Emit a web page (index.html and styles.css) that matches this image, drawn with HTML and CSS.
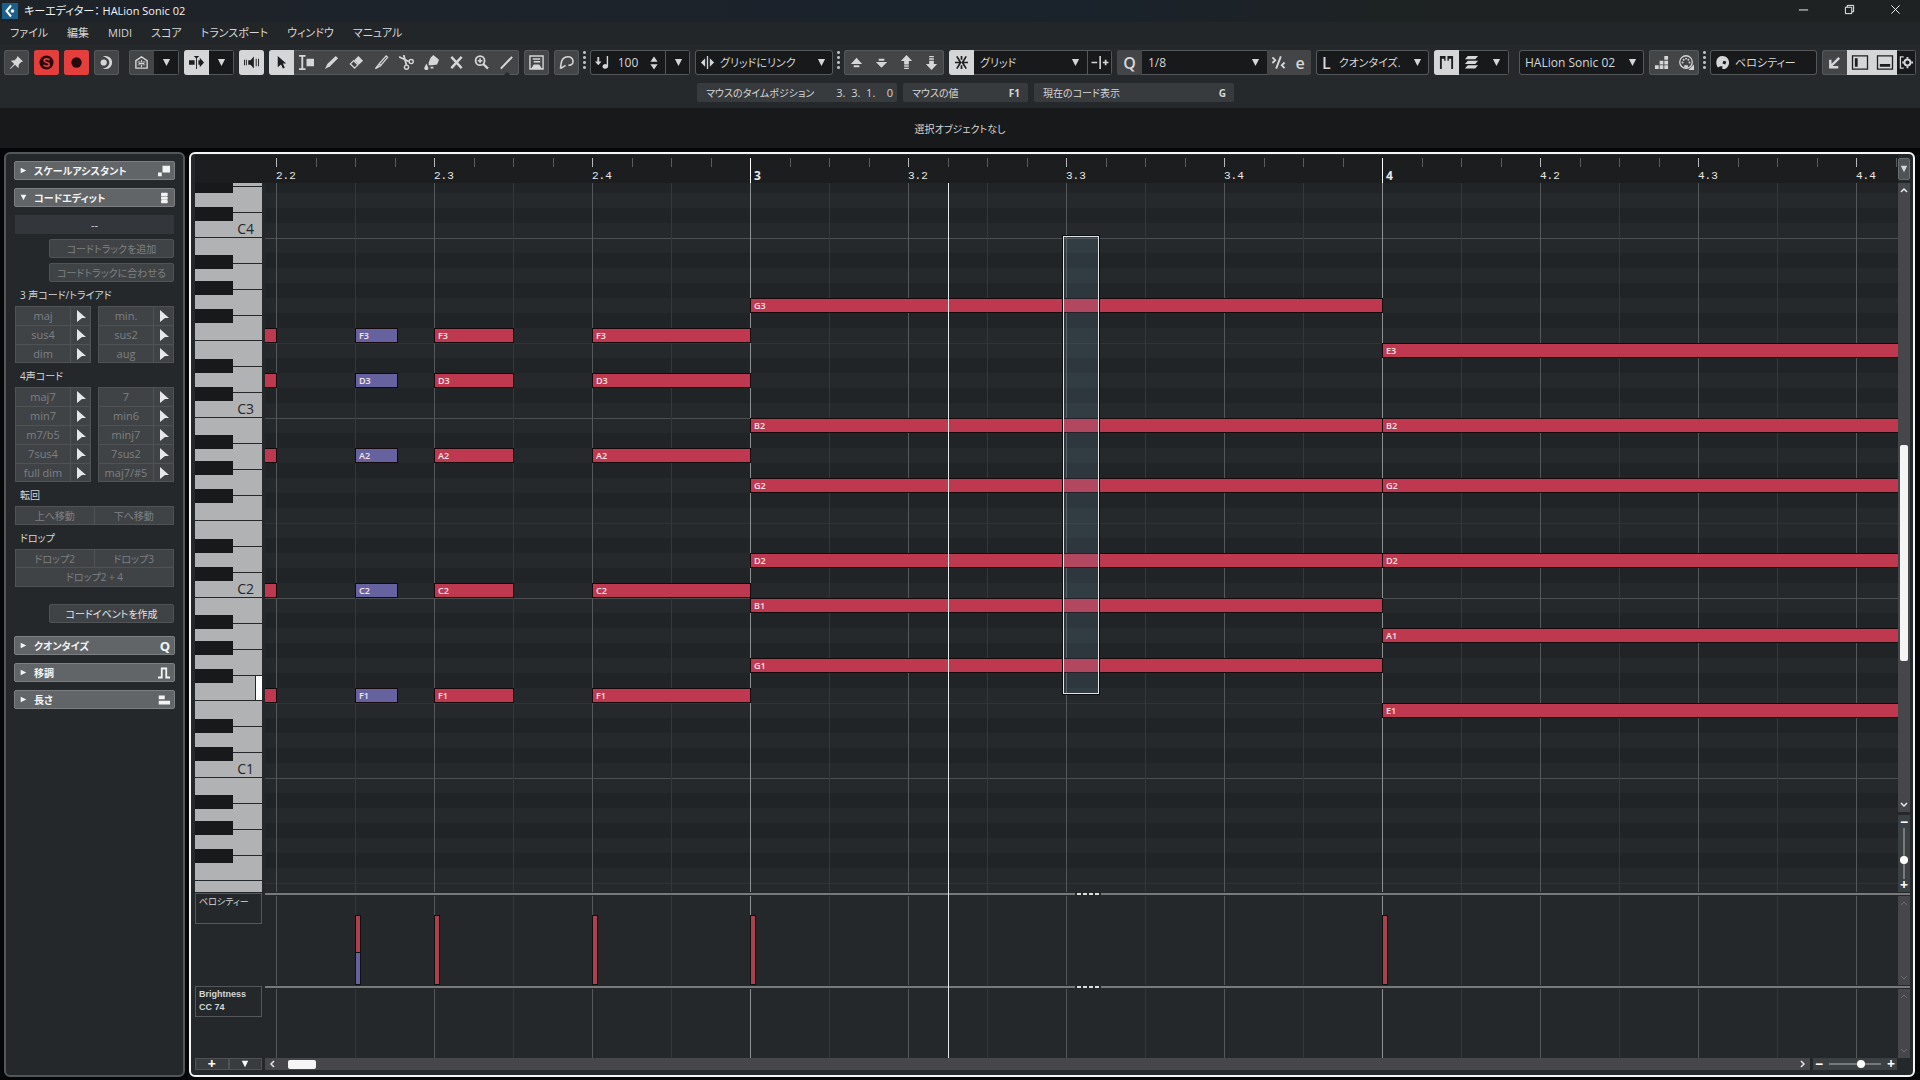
FILE: index.html
```html
<!DOCTYPE html>
<html lang="ja">
<head>
  <meta charset="UTF-8" />
  <title>キーエディター： HALion Sonic 02</title>
  <link rel="stylesheet" href="styles.css">
</head>
<body>
  <!-- icon set -->
  <svg class="sprite" aria-hidden="true">
    <symbol id="i-down" viewBox="0 0 10 10"><path d="M1 1h8L5 9z"/></symbol>
    <symbol id="i-right" viewBox="0 0 10 10"><path d="M1 1v8l8-4z"/></symbol>
    <symbol id="i-pin" viewBox="0 0 16 16"><path d="M9 1l6 6-2 .5-2.500 2.500L10 14l-3.500-3.500L1.500 15 1 14.500 5.500 9.500 2 6l4-.5L8.500 3z"/></symbol>
    <symbol id="i-solo" viewBox="0 0 16 16"><circle cx="8" cy="8" r="7.500"/><path d="M11 5.500C10 3.500 5.500 3.500 5.500 6S11 7.500 11 10s-5 2.500-6 .5" fill="none" stroke="#e43e3d" stroke-width="1.800"/></symbol>
    <symbol id="i-rec" viewBox="0 0 16 16"><circle cx="8" cy="8" r="5.500"/></symbol>
    <symbol id="i-moon" viewBox="0 0 16 16"><path d="M7 1a7 7 0 0 1 0 14H4c5-2 7-4 7-7S9 3 4 1z"/><circle cx="5" cy="8" r="3.300"/></symbol>
    <symbol id="i-home" viewBox="0 0 16 16"><path d="M2 6l6-4 6 4v8H2z" fill="none" stroke="currentColor" stroke-width="1.500"/><path d="M4 7h3v1H4zm5 0h3v1H9zM7.500 5h1v3h-1zM4 10h3v1H4zm5 0h3v1H9zM7.500 10h1v3h-1zM5 8.500h6v1H5z"/></symbol>
    <symbol id="i-scroll" viewBox="0 0 16 16"><path d="M0 5.500h6v5H0zM10 5.500h1.500V3l4.500 5-4.500 5v-2.500H10zM5 1h6L8.500 3.500V15h-1V3.500z"/></symbol>
    <symbol id="i-speaker" viewBox="0 0 16 16"><path d="M4.500 5.500H7l3.500-4v13L7 10.500H4.500zM0 5h1v6H0zM2 5h1v6H2zM12.500 4h1v8h-1zM15 4h1v8h-1z"/></symbol>
    <symbol id="i-pointer" viewBox="0 0 16 16"><path d="M4 1l9 8H9.500l2 4.500-2 1L7.500 10 4 13z"/></symbol>
    <symbol id="i-range" viewBox="0 0 16 16"><path d="M0 0h7v1.800H4.500v12.400H7V16H0v-1.800h2.500V1.800H0zM8 4h8v8H8z"/></symbol>
    <symbol id="i-pencil" viewBox="0 0 16 16"><path d="M12.500 1L15 3.500 6.500 12 1 15l2.500-5.500z"/></symbol>
    <symbol id="i-eraser" viewBox="0 0 16 16"><path d="M10 1l5 5-4.500 4.500-5-5z"/><path d="M5 6l4.500 4.500L6 14 1.500 9.500z" fill="none" stroke="currentColor" stroke-width="1.400"/></symbol>
    <symbol id="i-trim" viewBox="0 0 16 16"><path d="M13 1l1.500 1.500L7 11.500 5.500 9.500zM5.500 9.500L7 11.500 1.500 14.500z" fill="none" stroke="currentColor" stroke-width="1.400"/></symbol>
    <symbol id="i-split" viewBox="0 0 16 16"><path d="M0 2l10.500 5M8 11L5 0" fill="none" stroke="currentColor" stroke-width="1.900"/><circle cx="13" cy="7" r="2.200" fill="none" stroke="currentColor" stroke-width="1.500"/><circle cx="8" cy="13" r="2.200" fill="none" stroke="currentColor" stroke-width="1.500"/></symbol>
    <symbol id="i-glue" viewBox="0 0 16 16"><path d="M10 0l6 5-2 5-5 1-4 0 0-3 2-5zM2.500 9l1.900 4a2.200 2.200 0 1 1-3.800 0zM7 12.500h3v2H7z"/></symbol>
    <symbol id="i-x" viewBox="0 0 16 16"><path d="M2.500 2l11 12M13.500 2l-11 12" stroke="currentColor" stroke-width="2.600"/></symbol>
    <symbol id="i-zoom" viewBox="0 0 16 16"><circle cx="6.500" cy="6" r="4.800" fill="none" stroke="currentColor" stroke-width="1.900"/><path d="M4 5.200h5v1.600H4zM5.700 3.500h1.600v5H5.700zM9 10.500l1.800-1.800 5 5-1.800 1.800z"/></symbol>
    <symbol id="i-line" viewBox="0 0 16 16"><path d="M2 14.500L14 2" stroke="currentColor" stroke-width="2.200"/></symbol>
    <symbol id="i-stamp" viewBox="0 0 16 16"><path d="M1 1h14v14H1z" fill="none" stroke="currentColor" stroke-width="1.500"/><path d="M4 3.500h8V5H4zM5 6.500h7V8H5zM2 15l3-5h6l3 5z"/></symbol>
    <symbol id="i-curve" viewBox="0 0 16 16"><path d="M1.500 14.500L2.500 8C4 0 15 0 15 7c0 3-3 4-5 4M1.500 14.500L7 11" fill="none" stroke="currentColor" stroke-width="1.700"/></symbol>
    <symbol id="i-vel" viewBox="0 0 16 16"><path d="M2.500 2h2v5H7L3.500 11 0 7h2.500zM12.500 1H14v11a3 2.500 0 1 1-1.500-2z"/></symbol>
    <symbol id="i-spin" viewBox="0 0 10 16"><path d="M5 0l4.500 6.500h-9zM5 16L.5 9.500h9z"/></symbol>
    <symbol id="i-link" viewBox="0 0 16 16"><path d="M7.300 1h1.400v14H7.300zM5.500 3.500v9L1 8zM10.500 3.500v9L15 8z"/></symbol>
    <symbol id="i-up1" viewBox="0 0 16 16"><path d="M8 3l6 6.500H2zM5 11h6v2H5z"/></symbol>
    <symbol id="i-dn1" viewBox="0 0 16 16"><path d="M8 13.500L2 7.500h12zM5 4h6v2H5z"/></symbol>
    <symbol id="i-up2" viewBox="0 0 16 16"><path d="M8 0l6 6.500h-3.500V10h-5V6.500H2zM5.500 11h5v1.500h-5zM5.500 13.500h5V15h-5z"/></symbol>
    <symbol id="i-dn2" viewBox="0 0 16 16"><path d="M8 16l6-6.500h-3.500V6h-5v3.500H2zM5.500 3.500h5V5h-5zM5.500 1h5v1.500h-5z"/></symbol>
    <symbol id="i-snap" viewBox="0 0 16 16"><path d="M3 1.500L7 8l-4 6.500M13 1.500L9 8l4 6.500M8 1v4M8 11v4M1 8h5M10 8h5" fill="none" stroke="currentColor" stroke-width="1.800"/></symbol>
    <symbol id="i-gridtype" viewBox="0 0 18 16"><path d="M8.300 1h1.700v14H8.300zM0 7.100h6v1.800H0zM12 7.100h6v1.800h-6zM14.100 5h1.800v6h-1.800z"/></symbol>
    <symbol id="i-iter" viewBox="0 0 16 16"><path d="M10.500 1.500L5.500 14.500M1.500 2.500L4.500 5.500 1.500 8.500M14.500 8l-3 3 3 3" fill="none" stroke="currentColor" stroke-width="2"/></symbol>
    <symbol id="i-parts" viewBox="0 0 16 16"><path d="M1 1h6v5H5.500V4H3v11H1zM9 1h6v14h-2V4h-2.500v2H9z"/></symbol>
    <symbol id="i-layers" viewBox="0 0 16 16"><path d="M4 1h11l-3 3.500H1zM4 6h11l-3 3.500H1zM4 11h11l-3 3.500H1z"/></symbol>
    <symbol id="i-steps" viewBox="0 0 16 16"><path d="M1 11h4v4H1zM6 11h4v4H6zM11 11h4v4h-4zM6 6h4v4H6zM11 6h4v4h-4zM11 1h4v4h-4z"/></symbol>
    <symbol id="i-midi" viewBox="0 0 16 16"><circle cx="7.500" cy="7.500" r="6.700" fill="none" stroke="currentColor" stroke-width="1.400"/><circle cx="3.800" cy="8" r="1"/><circle cx="5" cy="5" r="1"/><circle cx="7.500" cy="3.800" r="1"/><circle cx="10" cy="5" r="1"/><circle cx="11.200" cy="8" r="1"/><path d="M16 10v6h-6zM5.500 11h4v2.500h-4z"/></symbol>
    <symbol id="i-palette" viewBox="0 0 16 16"><path d="M8 1c4 0 7 3 7 7 0 3-2 7-6 7-2 0-1-2-1-3H6c-2 0-1 1.500-3 1C0 9 1 1 8 1z"/><path d="M9 6l3 1-1 3-3-1z" fill="#17191a"/></symbol>
    <symbol id="i-corner" viewBox="0 0 16 16"><path d="M13 3L4 12M3.500 5v8H12" fill="none" stroke="currentColor" stroke-width="2.600"/></symbol>
    <symbol id="i-zleft" viewBox="0 0 18 16"><path d="M1 1h16v14H1z" fill="none" stroke="currentColor" stroke-width="1.400"/><path d="M3.500 3.500h3v9h-3z"/></symbol>
    <symbol id="i-zlow" viewBox="0 0 18 16"><path d="M1 1h16v14H1z" fill="none" stroke="currentColor" stroke-width="1.400"/><path d="M3.500 9.500h11v3h-11z"/></symbol>
    <symbol id="i-gear" viewBox="0 0 16 16"><path d="M5 2H1.500v12H5" fill="none" stroke="currentColor" stroke-width="1.400"/><circle cx="9" cy="8" r="3.200" fill="none" stroke="currentColor" stroke-width="2"/><path d="M8 2h2v2H8zM8 12h2v2H8zM13 7h2v2h-2zM3.500 7h2v2h-2z"/></symbol>
    <symbol id="i-notes" viewBox="0 0 16 16"><path d="M6 1h10v9H6zM0 10h5v5H0z"/></symbol>
    <symbol id="i-stack" viewBox="0 0 16 16"><path d="M5 2h7v2.500H5zM5 6.800h7v2.500H5zM5 11.600h7v2.500H5z" stroke="currentColor" stroke-width="1.800" stroke-linejoin="round"/></symbol>
    <symbol id="i-transpose" viewBox="0 0 16 16"><path d="M0 14h5V2h6v12h5" fill="none" stroke="currentColor" stroke-width="2.400"/></symbol>
    <symbol id="i-length" viewBox="0 0 16 16"><path d="M1 2h8v5H1zM1 9h15v5H1z"/></symbol>
    <symbol id="i-logo" viewBox="0 0 16 16"><path d="M9 2.500L4.500 8 9 13.500" fill="none" stroke="currentColor" stroke-width="2"/><circle cx="10.500" cy="8" r="1.800"/></symbol>
  </svg>

  <header class="titlebar">
    <span class="logo"><svg><use href="#i-logo"/></svg></span>
    <h1>キーエディター： HALion Sonic 02</h1>
    <div class="winbtns">
      <button aria-label="最小化"><svg viewBox="0 0 12 12"><path d="M1 6.500h10"/></svg></button>
      <button aria-label="元に戻す"><svg viewBox="0 0 12 12"><path d="M1.500 3.500h7v7h-7zM3.500 3.500v-2h7v7h-2"/></svg></button>
      <button aria-label="閉じる"><svg viewBox="0 0 12 12"><path d="M1.500 1.500l9 9M10.500 1.500l-9 9"/></svg></button>
    </div>
  </header>

  <nav class="menu">
    <button>ファイル</button>
    <button>編集</button>
    <button>MIDI</button>
    <button>スコア</button>
    <button>トランスポート</button>
    <button>ウィンドウ</button>
    <button>マニュアル</button>
  </nav>

  <div class="toolbar">
    <div class="group"><button aria-label="固定"><svg><use href="#i-pin"/></svg></button></div>
    <div class="group"><button class="red" aria-label="ソロ"><svg><use href="#i-solo"/></svg></button></div>
    <div class="group"><button class="red" aria-label="録音"><svg><use href="#i-rec"/></svg></button></div>
    <div class="group"><button aria-label="フィードバック"><svg><use href="#i-moon"/></svg></button></div>
    <div class="group wide-gap">
      <button aria-label="ズーム"><svg><use href="#i-home"/></svg></button>
      <button class="dark" aria-label="ズームメニュー"><svg class="tri"><use href="#i-down"/></svg></button>
    </div>
    <div class="group">
      <button class="on" aria-label="自動スクロール"><svg><use href="#i-scroll"/></svg></button>
      <button class="dark" aria-label="スクロール設定"><svg class="tri"><use href="#i-down"/></svg></button>
    </div>
    <div class="group"><button class="on" aria-label="試聴"><svg><use href="#i-speaker"/></svg></button></div>
    <div class="group">
      <button class="on" aria-label="選択"><svg><use href="#i-pointer"/></svg></button>
      <button aria-label="範囲"><svg><use href="#i-range"/></svg></button>
      <button aria-label="鉛筆"><svg><use href="#i-pencil"/></svg></button>
      <button aria-label="消しゴム"><svg><use href="#i-eraser"/></svg></button>
      <button aria-label="トリム"><svg><use href="#i-trim"/></svg></button>
      <button aria-label="分割"><svg><use href="#i-split"/></svg></button>
      <button aria-label="のり"><svg><use href="#i-glue"/></svg></button>
      <button aria-label="ミュート"><svg><use href="#i-x"/></svg></button>
      <button aria-label="虫眼鏡"><svg><use href="#i-zoom"/></svg></button>
      <button class="has-more" aria-label="ライン"><svg><use href="#i-line"/></svg></button>
    </div>
    <div class="group"><button aria-label="スタンプ"><svg><use href="#i-stamp"/></svg></button></div>
    <div class="group"><button aria-label="カーブ"><svg><use href="#i-curve"/></svg></button></div>
    <span class="dots"></span>
    <div class="group dark w-velocity">
      <svg class="lead"><use href="#i-vel"/></svg>
      <input type="number" value="100" aria-label="挿入ベロシティー">
      <svg class="spin"><use href="#i-spin"/></svg>
      <button class="dark divided" aria-label="ベロシティーメニュー"><svg class="tri"><use href="#i-down"/></svg></button>
    </div>
    <div class="group dark w-link">
      <svg class="lead"><use href="#i-link"/></svg>
      <select class="kana" aria-label="グリッドリンク"><option>グリッドにリンク</option></select>
      <svg class="tri"><use href="#i-down"/></svg>
    </div>
    <span class="dots"></span>
    <div class="group">
      <button aria-label="上へ"><svg><use href="#i-up1"/></svg></button>
      <button aria-label="下へ"><svg><use href="#i-dn1"/></svg></button>
      <button aria-label="オクターブ上へ"><svg><use href="#i-up2"/></svg></button>
      <button aria-label="オクターブ下へ"><svg><use href="#i-dn2"/></svg></button>
    </div>
    <div class="group dark w-snap">
      <button class="on" aria-label="スナップ"><svg><use href="#i-snap"/></svg></button>
      <select class="kana" aria-label="スナップタイプ"><option>グリッド</option></select>
      <svg class="tri"><use href="#i-down"/></svg>
      <button class="dark divided" aria-label="グリッドタイプ"><svg class="wide"><use href="#i-gridtype"/></svg></button>
    </div>
    <div class="group dark w-quantize">
      <button class="letter" aria-label="クオンタイズ">Q</button>
      <select aria-label="クオンタイズ値"><option>1/8</option></select>
      <svg class="tri"><use href="#i-down"/></svg>
      <button class="slim" aria-label="反復"><svg><use href="#i-iter"/></svg></button>
      <button class="letter slim" aria-label="設定">e</button>
    </div>
    <div class="group dark w-length">
      <span class="letter">L</span>
      <select class="kana" aria-label="長さ"><option>クオンタイズ.</option></select>
      <svg class="tri"><use href="#i-down"/></svg>
    </div>
    <div class="group dark">
      <button class="on" aria-label="パート枠"><svg><use href="#i-parts"/></svg></button>
      <button class="dark" aria-label="レイヤー"><svg><use href="#i-layers"/></svg></button>
      <button class="dark" aria-label="レイヤーメニュー"><svg class="tri"><use href="#i-down"/></svg></button>
    </div>
    <div class="group dark wide-gap w-part">
      <select aria-label="パート"><option>HALion Sonic 02</option></select>
      <svg class="tri"><use href="#i-down"/></svg>
    </div>
    <div class="group">
      <button aria-label="ステップ入力"><svg><use href="#i-steps"/></svg></button>
      <button aria-label="MIDI 入力"><svg><use href="#i-midi"/></svg></button>
    </div>
    <span class="dots"></span>
    <div class="group dark w-color">
      <svg class="lead"><use href="#i-palette"/></svg>
      <select class="kana" aria-label="カラー"><option>ベロシティー</option></select>
    </div>
    <div class="group">
      <button aria-label="別ウィンドウ"><svg><use href="#i-corner"/></svg></button>
      <button class="on" aria-label="左ゾーン"><svg class="wide"><use href="#i-zleft"/></svg></button>
      <button class="on" aria-label="下ゾーン"><svg class="wide"><use href="#i-zlow"/></svg></button>
      <button class="dark gear" aria-label="設定"><svg><use href="#i-gear"/></svg></button>
    </div>
  </div>

  <div class="info">
    <div class="field w-time"><span>マウスのタイムポジション</span><span class="pos">3.&nbsp; 3.&nbsp; 1.&nbsp; &nbsp; 0</span></div>
    <div class="field w-value"><span>マウスの値</span><b>F1</b></div>
    <div class="field w-chord"><span>現在のコード表示</span><b>G</b></div>
  </div>

  <div class="status">選択オブジェクトなし</div>

  <main>
    <aside class="panel">
      <button class="section"><svg class="tw"><use href="#i-right"/></svg>スケールアシスタント<svg><use href="#i-notes"/></svg></button>
      <button class="section"><svg class="tw"><use href="#i-down"/></svg>コードエディット<svg><use href="#i-stack"/></svg></button>
      <div class="inspector">
        <div class="chordname">--</div>
        <button class="cmd" disabled>コードトラックを追加</button>
        <button class="cmd" disabled>コードトラックに合わせる</button>
        <h2>3 声コード/トライアド</h2>
        <div class="chords" data-chords="maj,min.,sus4,sus2,dim,aug"></div>
        <h2>4声コード</h2>
        <div class="chords" data-chords="maj7,7,min7,min6,m7/b5,minj7,7sus4,7sus2,full dim,maj7/#5"></div>
        <h2>転回</h2>
        <div class="pair">
          <button disabled>上へ移動</button><button disabled>下へ移動</button>
        </div>
        <h2>ドロップ</h2>
        <div class="pair">
          <button disabled>ドロップ2</button><button disabled>ドロップ3</button>
          <button class="full" disabled>ドロップ2 + 4</button>
        </div>
        <button class="cmd create">コードイベントを作成</button>
      </div>
      <button class="section"><svg class="tw"><use href="#i-right"/></svg>クオンタイズ<span class="q">Q</span></button>
      <button class="section"><svg class="tw"><use href="#i-right"/></svg>移調<svg><use href="#i-transpose"/></svg></button>
      <button class="section"><svg class="tw"><use href="#i-right"/></svg>長さ<svg><use href="#i-length"/></svg></button>
    </aside>

    <section class="editor">
      <div class="ruler" id="ruler"></div>
      <button class="rulermenu" aria-label="ルーラー表示"><svg class="tri"><use href="#i-down"/></svg></button>

      <div class="piano" id="piano"></div>
      <div class="roll" id="roll"></div>
      <div class="vside">
        <div class="vscroll">
          <svg viewBox="0 0 8 5"><path d="M1 4l3-3 3 3"/></svg>
          <div class="thumb"></div>
          <svg viewBox="0 0 8 5"><path d="M1 1l3 3 3-3"/></svg>
        </div>
        <div class="vzoom">
          <button aria-label="縦ズームアウト">−</button>
          <input type="range" value="36" aria-label="縦ズーム">
          <button aria-label="縦ズームイン">+</button>
        </div>
      </div>

      <div class="divider d1"><span></span></div>
      <div class="lanename n1">ベロシティー</div>
      <div class="lane l1" id="velocity"></div>
      <div class="vscroll dim s1">
        <svg viewBox="0 0 8 5"><path d="M1 4l3-3 3 3"/></svg>
        <svg viewBox="0 0 8 5"><path d="M1 1l3 3 3-3"/></svg>
      </div>

      <div class="divider d2"><span></span></div>
      <div class="lanename n2"><b>Brightness<br>CC 74</b></div>
      <div class="lane l2"></div>
      <div class="vscroll dim s2">
        <svg viewBox="0 0 8 5"><path d="M1 4l3-3 3 3"/></svg>
        <svg viewBox="0 0 8 5"><path d="M1 1l3 3 3-3"/></svg>
      </div>

      <div class="lanebtns">
        <button aria-label="レーン追加">+</button>
        <button aria-label="レーンメニュー"><svg class="tri"><use href="#i-down"/></svg></button>
      </div>
      <div class="hside">
        <div class="hscroll">
          <svg viewBox="0 0 5 8"><path d="M4 1L1 4l3 3"/></svg>
          <div class="thumb"></div>
          <svg viewBox="0 0 5 8"><path d="M1 1l3 3-3 3"/></svg>
        </div>
        <div class="hzoom">
          <button aria-label="横ズームアウト">−</button>
          <input type="range" value="63" aria-label="横ズーム">
          <button aria-label="横ズームイン">+</button>
        </div>
      </div>

      <div class="overlay" id="overlay"></div>
    </section>
  </main>

  <script src="script.js"></script>
</body>
</html>
```
FILE: styles.css
```css
* {
  box-sizing: border-box;
}
body {
  margin: 0;
  height: 100vh;
  display: flex;
  flex-direction: column;
  background: #050607;
  color: #d4d6d7;
  font-family: "Open Sans", "Noto Sans CJK JP", sans-serif;
  font-size: 11px;
  line-height: 16px;
  font-feature-settings: "palt";
  overflow: hidden;
}
button, input, select {
  font: inherit;
  font-feature-settings: inherit;
  color: inherit;
  background: none;
  border: 0;
  margin: 0;
  padding: 0;
}
svg {
  fill: currentColor;
  flex: none;
}
.sprite {
  position: absolute;
  width: 0;
  height: 0;
}

/* title and menu */
.titlebar {
  height: 22px;
  display: flex;
  align-items: center;
  background: linear-gradient(90deg, #1e2328, #1a222c 55%, #1e2222 75%);
}
.logo {
  width: 16px;
  height: 16px;
  margin: 0 6px 0 2px;
  background: #1b5f8c;
  color: #fff;
}
.logo svg {
  display: block;
  width: 16px;
  height: 16px;
}
h1 {
  flex: 1;
  margin: 0;
  font-size: 11px;
  font-weight: normal;
  color: #f2f3f3;
}
.winbtns {
  display: flex;
}
.winbtns button {
  width: 46px;
  height: 22px;
}
.winbtns button:last-child {
  margin-right: 2px;
}
.winbtns svg {
  width: 11px;
  height: 11px;
  fill: none;
  stroke: #fff;
}
.menu {
  height: 23px;
  display: flex;
  gap: 19px;
  padding: 0 10px 2px;
  background: #232628;
}

/* toolbar */
.toolbar {
  display: flex;
  gap: 5px;
  height: 35px;
  padding: 5px 4px;
  background: #25292c;
}
.group {
  flex: none;
  display: flex;
  align-items: center;
  height: 25px;
  background: #434547;
  border-radius: 3px;
  box-shadow: inset 0 0 0 1px #55585a;
  overflow: hidden;
}
.group.dark {
  background: #17191a;
}
.wide-gap {
  margin-left: 5px;
}
.group button {
  position: relative;
  display: flex;
  align-items: center;
  justify-content: center;
  width: 25px;
  height: 25px;
}
.group svg {
  width: 15px;
  height: 15px;
}
.group svg.wide {
  width: 18px;
}
.group svg.tri {
  width: 9px;
  height: 9px;
}
.group select + .tri {
  margin: 0 7px;
}
.group button.dark {
  background: #17191a;
  box-shadow: inset 0 1px #55585a, inset 0 -1px #55585a;
}
.group button.dark:last-child {
  box-shadow: inset 0 1px #55585a, inset -1px -1px #55585a;
}
.group button.on {
  background: #d5d6d7;
  color: #1c1e1f;
}
.group button.red {
  background: #e43e3d;
  color: #260a0b;
}
.group button.divided {
  border-left: 1px solid #55585a;
}
.group button.gear {
  width: 19px;
}
.has-more::after {
  content: "";
  position: absolute;
  bottom: 0;
  left: 10px;
  border: 3px solid transparent;
  border-top-width: 0;
  border-bottom-color: #25292c;
}
.group select {
  flex: 1;
  min-width: 0;
  appearance: none;
  padding: 0 6px;
  font-size: 12px;
}
.group select.kana {
  font-size: 11px;
}
.group input {
  width: 30px;
  appearance: textfield;
  text-align: center;
  font-size: 12px;
}
.group input::-webkit-inner-spin-button {
  appearance: none;
}
.lead {
  margin-left: 5px;
}
.group .lead + select {
  padding: 0 5px;
}
.group .letter {
  font-size: 16px;
  font-weight: 600;
}
.w-quantize .letter {
  background: #434547;
}
.group button.slim {
  width: 22px;
  background: #434547;
}
.group span.letter {
  padding: 0 2px 0 6px;
}
.group svg.spin {
  width: 8px;
  height: 14px;
  margin: 0 7px 0 4px;
}
.w-velocity { width: 100px; }
.w-velocity input { flex: 1; }
.w-link { width: 138px; }
.w-snap { width: 163px; }
.w-quantize { width: 194px; }
.w-length { width: 113px; }
.w-part { width: 125px; }
.w-color { flex: 1; }
.dots {
  flex: none;
  width: 3px;
  margin: 0 -1px;
  background: radial-gradient(circle, #b9bbbc 1px, transparent 2px) 0 5px / 3px 5px repeat-y;
  height: 20px;
}

/* info line and status */
.info {
  display: flex;
  gap: 6px;
  height: 28px;
  padding: 3px 0 6px 697px;
  background: #25292c;
}
.field {
  display: flex;
  justify-content: space-between;
  align-items: center;
  padding: 0 8px;
  background: #383b3e;
  border-radius: 2px;
  font-size: 10px;
}
.field span:first-child {
  margin-left: 1px;
}
.field .pos {
  font-size: 11px;
  margin-right: -4px;
}
.w-time { width: 200px; }
.w-value { width: 125px; }
.w-chord { width: 200px; }
.status {
  height: 40px;
  line-height: 42px;
  font-size: 10px;
  text-align: center;
  background: #17191a;
}

/* left panel */
main {
  flex: 1;
  min-height: 0;
  display: flex;
  gap: 4px;
  padding: 4px 5px 3px 4px;
}
.panel {
  width: 181px;
  padding: 7px 8px;
  background: #24282b;
  border: 2px solid #54575a;
  border-radius: 6px;
}
.section {
  display: flex;
  align-items: center;
  width: 100%;
  height: 19px;
  margin-bottom: 8px;
  padding: 0 4px 0 5px;
  background: #626568;
  border: 1px solid #7d8082;
  border-radius: 2px;
  color: #f2f3f3;
  font-size: 10px;
  font-weight: bold;
  text-align: left;
}
.section svg {
  width: 12px;
  height: 12px;
  margin-left: auto;
}
.section .tw {
  width: 7px;
  height: 7px;
  margin: 0 7px 0 0;
}
.q {
  margin-left: auto;
  font-size: 13px;
}
.inspector {
  padding: 0 1px 5px;
  display: flex;
  flex-direction: column;
  margin-bottom: 8px;
}
.chordname {
  height: 19px;
  line-height: 19px;
  text-align: center;
  background: #33363a;
  margin-bottom: 5px;
}
.cmd, .chords button, .pair button {
  height: 19px;
  background: #404346;
  border: 1px solid #505356;
  color: #e2e3e4;
}
.cmd, .pair button {
  font-size: 10px;
}
.cmd {
  width: 125px;
  margin: 0 0 5px auto;
  border-radius: 2px;
  line-height: 16px;
}
.inspector button:disabled {
  color: #7d8083;
}
.inspector .create {
  margin: 17px 0 0 auto;
}
h2 {
  margin: 5px 5px 3px;
  font-size: 10px;
  font-weight: normal;
  line-height: 16px;
}
.cmd + h2 {
  margin-top: 0;
}
.chords {
  display: grid;
  grid-template-columns: 1fr 20px 7px 1fr 20px;
}
.chords button {
  border-bottom-width: 0;
  line-height: 16px;
}
.chords button.drag {
  border-left-width: 0;
  color: #e6e7e8;
}
.chords button.drag:nth-child(4n + 2) {
  grid-column: 2;
}
.chords button.name:nth-child(4n + 3) {
  grid-column: 4;
}
.chords button:nth-last-child(-n + 4) {
  border-bottom-width: 1px;
}
.chords svg {
  width: 10px;
  height: 12px;
  display: block;
  margin: auto;
}
.pair {
  display: grid;
  grid-template-columns: 1fr 1fr;
}
.pair button + button {
  border-left-width: 0;
}
.pair .full {
  grid-column: span 2;
  border-top-width: 0;
}
.pair button.full {
  border-left-width: 1px;
}

/* editor window */
.editor {
  flex: 1;
  min-width: 0;
  display: grid;
  grid-template-columns: 67px minmax(0, 1fr) 12px;
  grid-template-rows: 28px minmax(0, 1fr) 4px 89px 4px 69px 12px;
  column-gap: 3px;
  padding: 1px 3px 5px 4px;
  background: #24282b;
  border: 2px solid #f4f5f5;
  border-radius: 6px;
}
.ruler {
  grid-area: 1 / 1 / 2 / 3;
  position: relative;
  margin-right: -3px;
  background: #1b1d1f;
  overflow: hidden;
}
.tick {
  position: absolute;
  top: 3px;
  width: 1px;
  height: 9px;
  background: #5a5d5f;
}
.tick.beat {
  background: #b5b7b8;
}
.tick.measure {
  height: 25px;
  background: #fff;
}
.tick span {
  position: absolute;
  top: 10px;
  font-family: "Liberation Mono", monospace;
  font-size: 11px;
  color: #e6e7e8;
}
.tick.measure span {
  left: 4px;
  font-family: "Open Sans", sans-serif;
  font-size: 12px;
  font-weight: bold;
}
.rulermenu {
  grid-area: 1 / 3;
  height: 22px;
  margin-top: 3px;
  background: #505356;
  border: 1px solid #6b6e70;
  border-radius: 2px;
}
.tri {
  width: 8px;
  height: 8px;
}

/* keyboard */
.piano {
  grid-area: 2 / 1;
  overflow: hidden;
  background: #b1b2b4;
}
.octave {
  position: relative;
  height: 180px;
  /* white key edges, B down to C */
  background:
    linear-gradient(#24282b, #24282b) 0 25px / 100% 1px,
    linear-gradient(#24282b, #24282b) 0 51px / 100% 1px,
    linear-gradient(#24282b, #24282b) 0 77px / 100% 1px,
    linear-gradient(#24282b, #24282b) 0 102px / 100% 1px,
    linear-gradient(#24282b, #24282b) 0 128px / 100% 1px,
    linear-gradient(#24282b, #24282b) 0 154px / 100% 1px,
    linear-gradient(#24282b, #24282b) 0 179px / 100% 1px;
  background-repeat: no-repeat;
}
.octave:first-child {
  margin-top: -125px;
}
.black {
  position: absolute;
  left: 0;
  width: 38px;
  height: 14px;
  background: #17191a;
}
.octave span {
  position: absolute;
  right: 8px;
  bottom: 1px;
  font-size: 14px;
  color: #25282a;
}
.pressed {
  position: absolute;
  right: 0;
  width: 7px;
  height: 24px;
  background: #fff;
  border-left: 1px solid #25282a;
}

/* note display */
.roll, .lane {
  --beats:
    linear-gradient(90deg, #8d9091 1px, transparent 1px) 485px 0 / 632px 100%,
    linear-gradient(90deg, #55585a 1px, transparent 1px) 11px 0 / 158px 100%,
    linear-gradient(90deg, #34383a 1px, transparent 1px) 90px 0 / 158px 100%;
  position: relative;
  overflow: hidden;
  margin-right: -3px;
  background: var(--beats), #24282b;
}
.roll {
  grid-area: 2 / 2;
  background:
    var(--beats),
    linear-gradient(transparent 179px, #4b4f51 179px) 0 56px / 100% 180px,
    linear-gradient(transparent 104px, #303436 104px, #303436 105px, transparent 105px) 0 56px / 100% 180px,
    linear-gradient(
      #25292c 15px, #212426 15px, #212426 30px, #25292c 30px, #25292c 45px,
      #212426 45px, #212426 60px, #25292c 60px, #25292c 75px, #212426 75px,
      #212426 90px, #25292c 90px, #25292c 120px, #212426 120px, #212426 135px,
      #25292c 135px, #25292c 150px, #212426 150px, #212426 165px, #25292c 165px
    ) 0 55px / 100% 180px;
}
.note {
  position: absolute;
  height: 15px;
  padding-left: 3px;
  background: #be384f;
  border: 1px solid #16090c;
  color: #f7e3e6;
  font-size: 9px;
  font-weight: 600;
  line-height: 14px;
  white-space: nowrap;
}
.note.soft, .bar.soft {
  background: #6662a0;
}
.select-box {
  position: absolute;
  background: rgba(120, 155, 185, 0.17);
  border: 1px solid #dfe3e4;
  outline: 1px solid #0c0d0e;
}
.bar {
  position: absolute;
  bottom: 0;
  width: 6px;
  background: #ac404e;
  border: 1px solid #0f1011;
}
.divider {
  align-self: center;
  height: 2px;
  background: #77797a;
}
.d1 { grid-area: 3 / 2 / 4 / 4; }
.d2 { grid-area: 5 / 2 / 6 / 4; }
.divider span {
  display: block;
  width: 26px;
  height: 2px;
  margin: 0 auto;
  background: repeating-linear-gradient(90deg, #24282b 0, #24282b 2px, #dcdddd 2px, #dcdddd 6px);
}
.l1 { grid-area: 4 / 2; }
.l2 { grid-area: 6 / 2; }
.lanename {
  height: 31px;
  padding: 1px 3px;
  border: 1px solid #55585a;
  font-size: 9px;
  line-height: 13px;
}
.n1 { grid-area: 3 / 1 / 5 / 2; margin-top: 1px; }
.n2 { grid-area: 5 / 1 / 7 / 2; margin-top: 1px; }
.n2 { font-family: "Liberation Sans", sans-serif; }
.overlay {
  grid-area: 2 / 2 / 7 / 3;
  position: relative;
  pointer-events: none;
}
.playhead {
  position: absolute;
  top: 0;
  bottom: 0;
  width: 1px;
  background: #e6e9e9;
}

/* scroll bars and zoom sliders */
.vside {
  grid-area: 2 / 3;
  min-height: 0;
  display: flex;
  flex-direction: column;
  gap: 3px;
}
.vscroll {
  flex: 1;
  min-height: 0;
  display: flex;
  flex-direction: column;
  justify-content: space-between;
  align-items: center;
  padding: 5px 0;
  background: #45474a;
}
.vscroll svg, .hscroll svg {
  width: 8px;
  height: 5px;
  fill: none;
  stroke: #e6e7e8;
  stroke-width: 1.5;
}
.vscroll.dim svg {
  stroke: #6b6e70;
  stroke-width: 1;
}
.s1 { grid-area: 4 / 3; }
.s2 { grid-area: 6 / 3; }
.vscroll .thumb {
  width: 8px;
  height: 216px;
  margin: 252px 0 auto;
  background: #f4f5f5;
  border-radius: 2px;
}
.vzoom, .hzoom {
  display: flex;
  align-items: center;
  background: #3b4043;
}
.vzoom {
  flex-direction: column;
  height: 77px;
  padding: 1px 0;
}
.vzoom button, .hzoom button, .lanebtns button {
  width: 12px;
  height: 12px;
  font-size: 14px;
  font-weight: bold;
  line-height: 12px;
  color: #fff;
}
.vzoom input {
  writing-mode: vertical-lr;
  direction: rtl;
  flex: 1;
  min-height: 0;
  width: 8px;
}
input[type="range"] {
  appearance: none;
  background: linear-gradient(#77797a, #77797a) center / 2px 100% no-repeat;
}
.hzoom input {
  flex: 1;
  min-width: 0;
  height: 8px;
  margin: 0 4px;
}
.hzoom input[type="range"] {
  background: linear-gradient(#77797a, #77797a) center / 100% 2px no-repeat;
}
input[type="range"]::-webkit-slider-thumb {
  appearance: none;
  width: 8px;
  height: 8px;
  border-radius: 50%;
  background: #fff;
}
.lanebtns {
  grid-area: 7 / 1;
  display: flex;
}
.lanebtns button {
  flex: 1;
  background: #393c3e;
  border: 1px solid #505356;
  line-height: 10px;
}
.lanebtns .tri {
  display: block;
  margin: auto;
}
.hside {
  grid-area: 7 / 2;
  display: flex;
  gap: 3px;
  margin-right: -2px;
}
.hscroll {
  flex: 1;
  display: flex;
  justify-content: space-between;
  align-items: center;
  padding: 0 5px;
  background: #45474a;
}
.hscroll svg {
  width: 5px;
  height: 8px;
}
.hscroll .thumb {
  width: 28px;
  height: 9px;
  margin: 0 auto 0 13px;
  background: #f4f5f5;
  border-radius: 2px;
}
.hzoom {
  width: 84px;
}
```
FILE: script.js
```js
const BEAT = 158;      // px per beat
const ORIGIN = 11;     // x of beat 2.2
const ROW = 15;        // px per semitone
const TOP_C = 235;     // y of the lower edge of C3
const STEPS = { C: 0, D: 2, E: 4, F: 5, G: 7, A: 9, B: 11 };

const beatX = beat => ORIGIN + Math.round(beat * BEAT);

const chords = [
  { at: -1, length: 1, keys: ['F3', 'D3', 'A2', 'C2', 'F1'], cut: true },
  { at: 0.5, length: 0.265, keys: ['F3', 'D3', 'A2', 'C2', 'F1'], soft: true },
  { at: 1, length: 0.5, keys: ['F3', 'D3', 'A2', 'C2', 'F1'] },
  { at: 2, length: 1, keys: ['F3', 'D3', 'A2', 'C2', 'F1'] },
  { at: 3, length: 4, keys: ['G3', 'B2', 'G2', 'D2', 'B1', 'G1'] },
  { at: 7, length: 4, keys: ['E3', 'B2', 'G2', 'D2', 'A1', 'E1'] }
];

function add(parent, className, style, text) {
  const el = document.createElement('div');
  el.className = className;
  for (const key in style) el.style[key] = style[key] + 'px';
  if (text) el.textContent = text;
  parent.appendChild(el);
  return el;
}

// ruler
const ruler = document.getElementById('ruler');
for (let i = 0; i <= 41; i++) {
  const beat = i / 4;
  const onBeat = i % 4 === 0;
  const onBar = onBeat && (beat + 1) % 4 === 0;
  const tick = add(ruler, 'tick' + (onBar ? ' measure' : onBeat ? ' beat' : ''), { left: 70 + beatX(beat) });
  if (onBeat) {
    const label = document.createElement('span');
    const bar = 2 + Math.floor((beat + 1) / 4);
    label.textContent = onBar ? bar : bar + '.' + ((beat + 1) % 4 + 1);
    tick.appendChild(label);
  }
}

// keyboard, the lowest octave runs out below the view
const piano = document.getElementById('piano');
for (let octave = 4; octave >= 0; octave--) {
  const el = add(piano, 'octave', {});
  [17, 43, 71, 121, 149].forEach(top => add(el, 'black', { top }));
  if (octave === 1) add(el, 'pressed', { top: 78 });
  if (octave > 0) {
    const label = document.createElement('span');
    label.textContent = 'C' + octave;
    el.appendChild(label);
  }
}

// notes
const roll = document.getElementById('roll');
const velocity = document.getElementById('velocity');
chords.forEach(chord => {
  const left = beatX(chord.at);
  const width = beatX(chord.at + chord.length) - left + 1;
  chord.keys.forEach(key => {
    const semis = (key[1] - 3) * 12 + STEPS[key[0]];
    add(roll, 'note' + (chord.soft ? ' soft' : ''), { left, width, top: TOP_C - (semis + 1) * ROW }, chord.cut ? '' : key);
  });
  if (!chord.cut) add(velocity, 'bar', { left, height: 70 });
  if (chord.soft) add(velocity, 'bar soft', { left, height: 33 });
});
add(roll, 'select-box', { left: 798, top: 53, width: 36, height: 458 });
add(document.getElementById('overlay'), 'playhead', { left: 683 });

// chord buttons
document.querySelectorAll('.chords').forEach(box => {
  box.dataset.chords.split(',').forEach(name => {
    box.insertAdjacentHTML('beforeend',
      `<button class="name" disabled>${name}</button>` +
      `<button class="drag" aria-label="${name}"><svg viewBox="0 0 10 12"><path d="M1 0l9 8H6l-5 4z"/></svg></button>`);
  });
});
```
